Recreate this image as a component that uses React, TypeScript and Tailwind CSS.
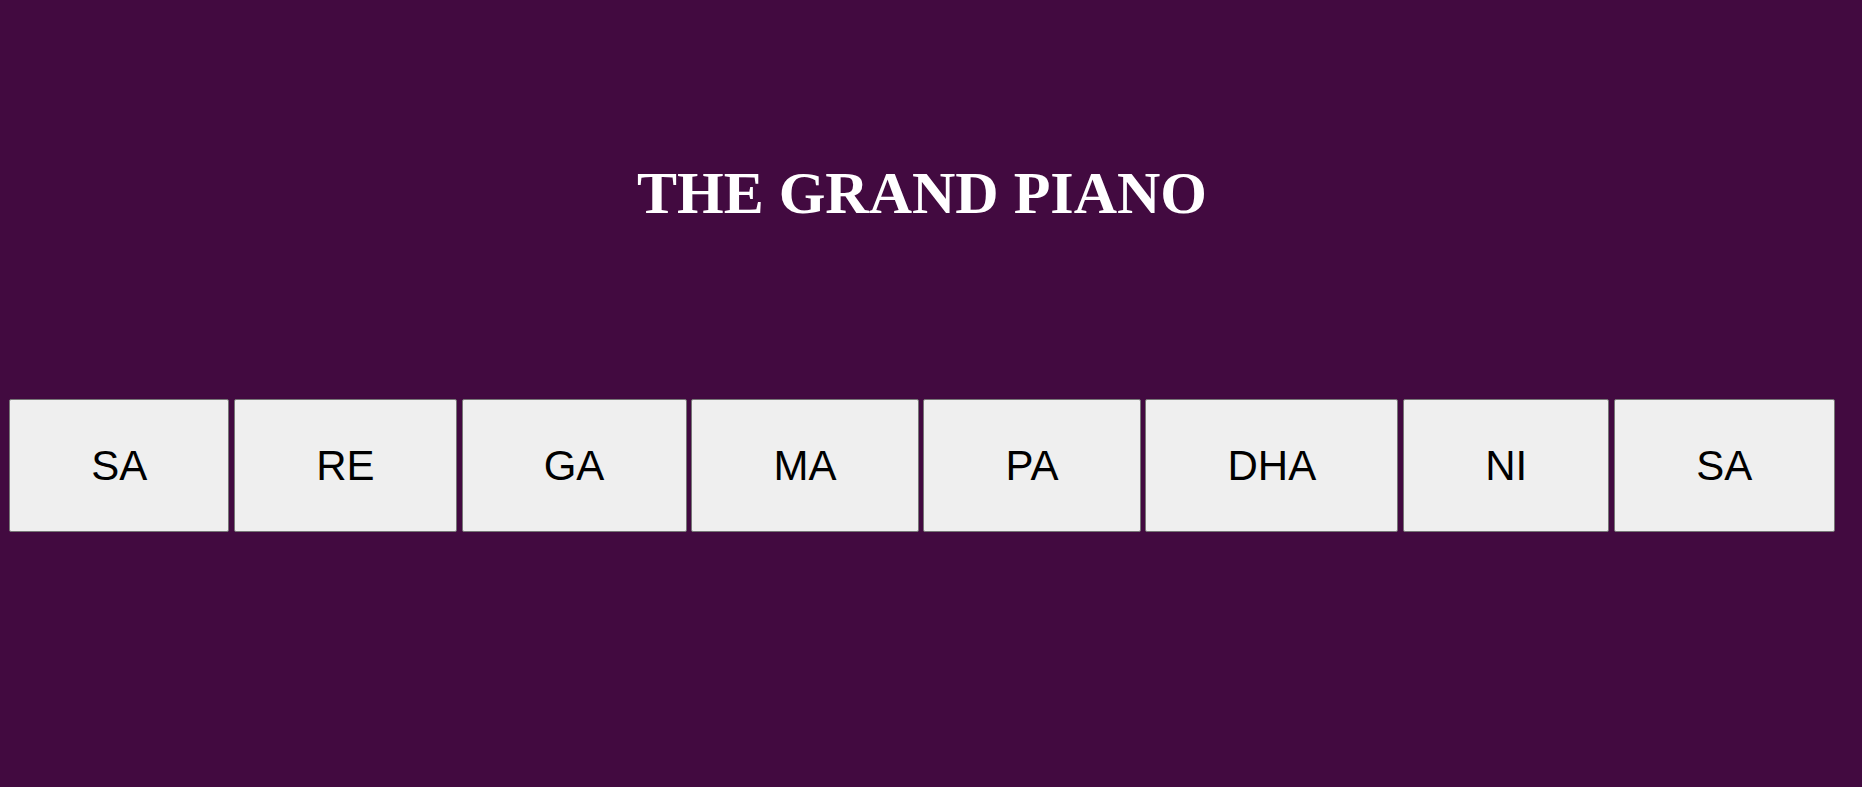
import React from "react";

const notes = ["SA", "RE", "GA", "MA", "PA", "DHA", "NI", "SA"];

export default function App() {
  return (
    <div className="min-h-screen w-full bg-[#420a40]">
      <div className="w-[1844px]">
        <h1 className="pt-[163px] text-center font-['Liberation_Serif',serif] text-[60px] font-bold leading-[60px] text-white">
          THE GRAND PIANO
        </h1>
        <div className="mt-[176px] flex gap-[4.7px] pl-[9px]">
          {notes.map((n, i) => (
            <button
              key={i}
              className="rounded-[2px] border border-[#767676] bg-[#efefef] px-[81.2px] py-[41.5px] font-['Liberation_Sans',Arial,sans-serif] text-[42px] leading-[48px] text-black"
            >
              {n}
            </button>
          ))}
        </div>
      </div>
    </div>
  );
}
